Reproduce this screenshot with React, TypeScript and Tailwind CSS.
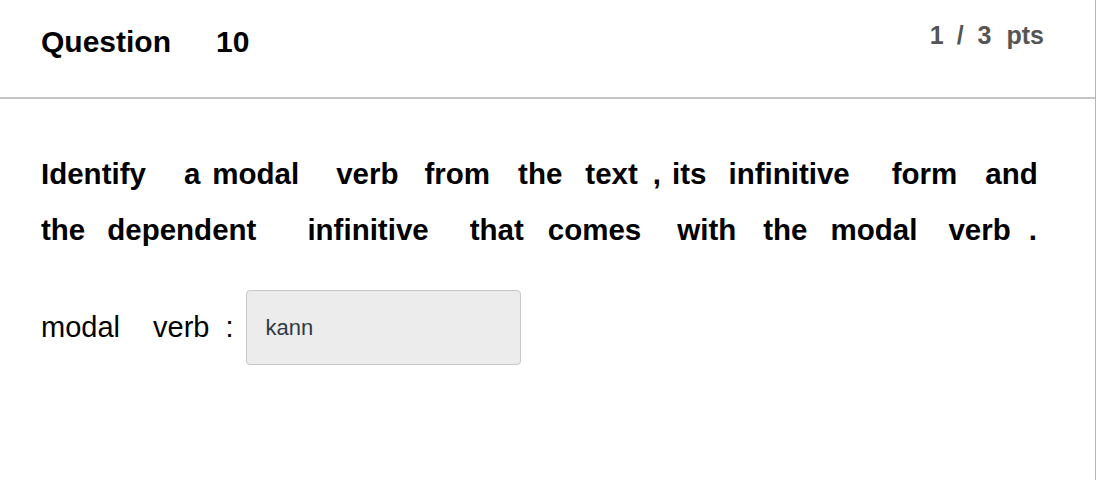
const lineOne = [
  { w: 'Identify', cls: '' },
  { w: 'a', cls: 'ml-[38px]' },
  { w: 'modal', cls: 'ml-[12px]' },
  { w: 'verb', cls: 'ml-[37px]' },
  { w: 'from', cls: 'ml-[26px]' },
  { w: 'the', cls: 'ml-[28px]' },
  { w: 'text', cls: 'ml-[23px]' },
  { w: ',', cls: 'ml-[15px]' },
  { w: 'its', cls: 'ml-[11px]' },
  { w: 'infinitive', cls: 'ml-[22px]' },
  { w: 'form', cls: 'ml-[42px]' },
  { w: 'and', cls: 'ml-[28px]' },
]

const lineTwo = [
  { w: 'the', cls: '' },
  { w: 'dependent', cls: 'ml-[22px]' },
  { w: 'infinitive', cls: 'ml-[51px]' },
  { w: 'that', cls: 'ml-[41px]' },
  { w: 'comes', cls: 'ml-[24px]' },
  { w: 'with', cls: 'ml-[36px]' },
  { w: 'the', cls: 'ml-[27px]' },
  { w: 'modal', cls: 'ml-[23px]' },
  { w: 'verb', cls: 'ml-[31px]' },
  { w: '.', cls: 'ml-[18px]' },
]

function Line({ words }: { words: { w: string; cls: string }[] }) {
  return (
    <div className="flex h-[56px] items-center whitespace-nowrap leading-[56px]">
      {words.map((item, i) => (
        <span key={i} className={item.cls}>
          {item.w}
        </span>
      ))}
    </div>
  )
}

export default function App() {
  return (
    <div className="h-[480px] w-[1096px] border-r border-[#b4b4b4] bg-white font-['Liberation_Sans',Arial,sans-serif] text-black">
      {/* header */}
      <div className="flex h-[99px] items-start justify-between border-b-2 border-[#c4c4c4] pl-[41px] pr-[51px]">
        <div className="mt-[27px] flex text-[30px] font-bold leading-none">
          <span>Question</span>
          <span className="ml-[45px]">10</span>
        </div>
        <div className="mt-[23px] flex text-[25px] font-bold leading-none text-[#555555]">
          <span>1</span>
          <span className="ml-[13px]">/</span>
          <span className="ml-[14px]">3</span>
          <span className="ml-[15px]">pts</span>
        </div>
      </div>

      {/* question body */}
      <div className="pl-[41px] pt-[47px]">
        <div className="text-[29.5px] font-bold">
          <Line words={lineOne} />
          <Line words={lineTwo} />
        </div>

        <div className="mt-[32px] flex items-center text-[29px]">
          <span>modal</span>
          <span className="ml-[33px]">verb</span>
          <span className="ml-[16px]">:</span>
          <div className="ml-[13px] flex h-[75px] w-[275px] items-center rounded-[4px] border border-[#c8c8c8] bg-[#ececec] pl-[18px] text-[22px] text-[#2d3b45]">
            kann
          </div>
        </div>
      </div>
    </div>
  )
}
